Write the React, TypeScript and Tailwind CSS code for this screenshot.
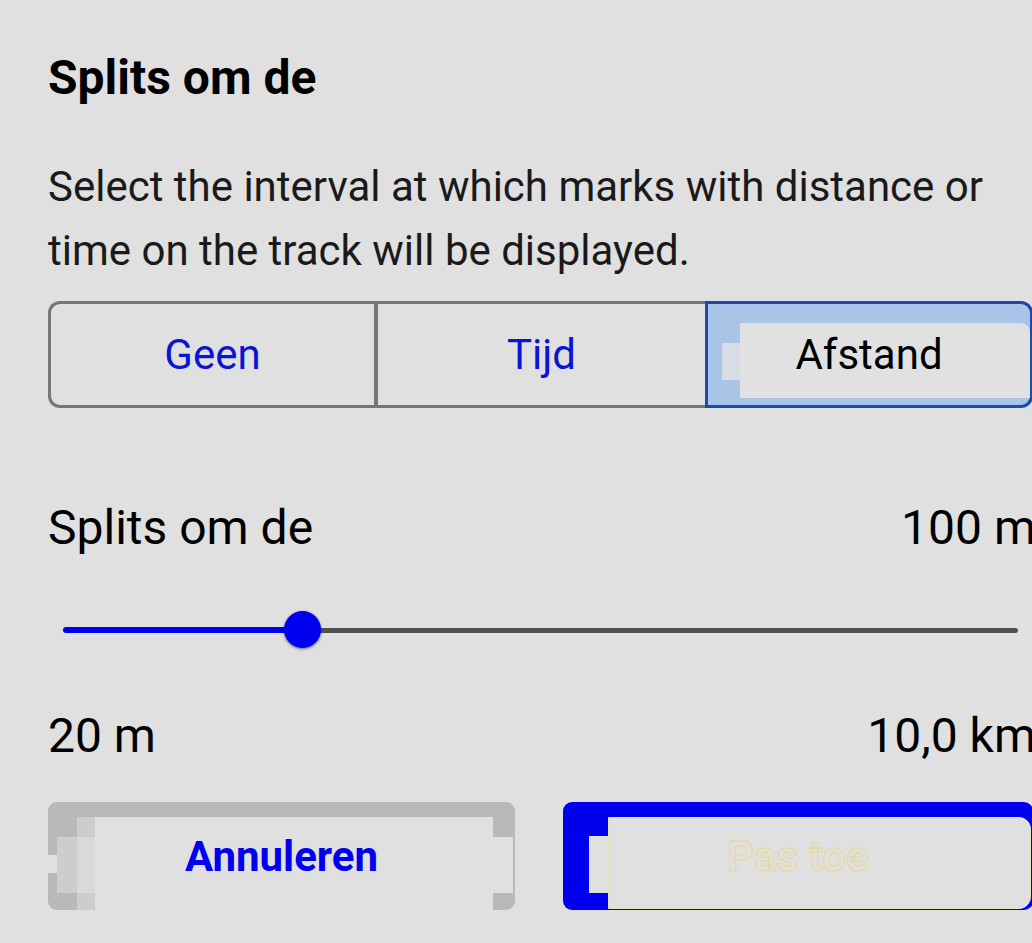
export default function App() {
  return (
    <div
      className="w-[1032px] h-[943px] overflow-hidden bg-[#e0e0e0] text-black"
      style={{ fontFamily: "Roboto, 'Noto Sans', sans-serif" }}
    >
      <div className="w-[1036px] pl-12 pt-[50px]">
        <h1 className="text-[48px] leading-[56px] font-bold">Splits om de</h1>

        <p className="mt-[49px] w-[960px] text-[42px] leading-[64px] text-[#1a1a1a]">
          Select the interval at which marks with distance or time on the track will be displayed.
        </p>

        {/* segmented control */}
        <div className="mt-[18px] flex h-[107px] w-[985px]">
          <button className="w-[326px] rounded-l-[12px] border-[3px] border-r-0 border-[#767676] text-[42px] text-[#0a14d6]">
            Geen
          </button>
          <button className="w-[331px] border-[3px] border-l-4 border-r-0 border-[#767676] text-[42px] text-[#0a14d6]">
            Tijd
          </button>
          <div className="relative flex flex-1 items-center justify-center rounded-r-[12px] border-[3px] border-[#1d4aa6] bg-[#a9c4e6]">
            <div className="absolute left-[14px] top-[39px] h-[37px] w-[18px] bg-[#d8dde4]" />
            <div className="absolute left-[32px] right-0 top-[19px] bottom-[7px] rounded-tr-[9px] bg-[#e1e1e1]" />
            <span className="relative text-[42px]">Afstand</span>
          </div>
        </div>

        {/* value row */}
        <div className="mt-[92px] flex justify-between text-[48px] leading-[56px]">
          <span>Splits om de</span>
          <span>100 m</span>
        </div>

        {/* slider */}
        <div className="relative mt-[54px] ml-[15px] flex h-[40px] w-[955px] items-center">
          <div className="h-[6px] w-[230px] rounded-l-full bg-[#0000ee]" />
          <div className="h-[5px] flex-1 rounded-r-full bg-[#505050]" />
          <div className="absolute left-[221px] top-[1px] h-[37px] w-[37px] rounded-full bg-[#0000f0] shadow-[0_1px_3px_rgba(0,0,60,0.6)]" />
        </div>

        <div className="mt-[58px] flex justify-between text-[48px] leading-[56px]">
          <span>20 m</span>
          <span>10,0 km</span>
        </div>

        {/* buttons */}
        <div className="mt-[38px] flex w-[985px] gap-[48px]">
          <button className="relative flex h-[108px] w-[467px] items-center justify-center rounded-[9px] bg-[#b9b9b9]">
            <div className="absolute left-0 top-[53px] h-[18px] w-[9px] bg-[#e0e0e0]" />
            <div className="absolute left-[9px] top-[35px] h-[56px] w-[20px] bg-[#cdcdcd]" />
            <div className="absolute left-[29px] top-[15px] bottom-0 w-[18px] bg-[#cdcdcd]" />
            <div className="absolute left-[29px] top-[35px] h-[56px] w-[18px] bg-[#d9d9d9]" />
            <div className="absolute left-[47px] right-[22px] top-[15px] bottom-0 bg-[#e0e0e0]" />
            <div className="absolute right-[2px] top-[35px] h-[56px] w-[20px] bg-[#e0e0e0]" />
            <span className="relative text-[42px] font-bold text-[#0000ee]">Annuleren</span>
          </button>
          <button className="relative flex h-[108px] flex-1 items-center justify-center rounded-[9px] bg-[#0000ee]">
            <div className="absolute left-[26px] top-[34px] h-[57px] w-[19px] bg-[#e0e0e0]" />
            <div className="absolute left-[45px] right-[2px] top-[15px] bottom-[1px] rounded-r-[12px] border border-[#e9e2b8] bg-[#e0e0e0]" />
            <span className="relative text-[42px] font-bold text-[#e1e0da] [-webkit-text-stroke:1px_#e4d99c]">
              Pas toe
            </span>
          </button>
        </div>
      </div>
    </div>
  );
}
